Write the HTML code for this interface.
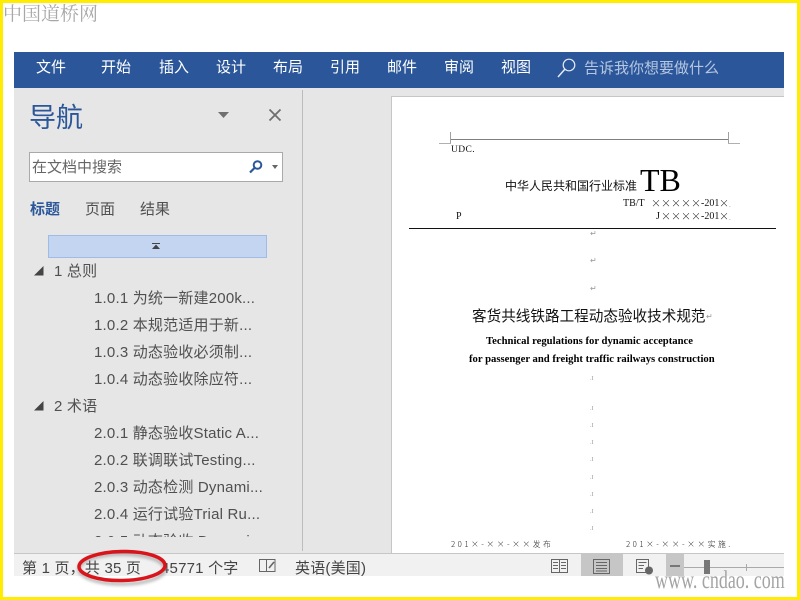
<!DOCTYPE html>
<html lang="zh">
<head>
<meta charset="utf-8">
<style>
html,body{margin:0;padding:0;background:#fff}
#r{position:relative;width:800px;height:600px;overflow:hidden;background:#fff;font-family:"Liberation Sans","Noto Sans CJK SC",sans-serif;color:#444}
.a,.t{position:absolute}
.t{white-space:nowrap;line-height:20px}
.m{color:#fff;font-size:15px;top:58px}
.n{font-size:15px;color:#505050;left:94px;letter-spacing:.2px}
.s{font-size:15px;color:#444;top:559px;letter-spacing:.2px}
.d{font-family:"Liberation Serif","Noto Sans CJK SC",serif;color:#111}
.k{font-size:6px;color:#999;font-family:"Liberation Serif",serif;left:590px}
.x{font-family:"Noto Sans CJK SC",sans-serif;font-weight:300}
</style>
</head>
<body>
<div id="r">
<!-- yellow frame -->
<div class="a" style="left:0;top:0;width:800px;height:3px;background:#ffec00"></div>
<div class="a" style="left:0;top:0;width:3px;height:600px;background:#ffec00"></div>
<div class="a" style="left:797px;top:0;width:3px;height:600px;background:#ffec00"></div>
<div class="a" style="left:0;top:597px;width:800px;height:3px;background:#ffec00"></div>

<div class="t" style="left:3px;top:1px;font-size:19px;line-height:24px;color:#a8a8a8;font-family:'Noto Serif CJK SC',serif">中国道桥网</div>

<!-- ribbon -->
<div class="a" style="left:14px;top:52px;width:770px;height:36px;background:#2b579a"></div>
<div class="t m" style="left:36px">文件</div>
<div class="t m" style="left:101px">开始</div>
<div class="t m" style="left:159px">插入</div>
<div class="t m" style="left:216px">设计</div>
<div class="t m" style="left:273px">布局</div>
<div class="t m" style="left:330px">引用</div>
<div class="t m" style="left:387px">邮件</div>
<div class="t m" style="left:444px">审阅</div>
<div class="t m" style="left:501px">视图</div>
<svg class="a" style="left:556px;top:57px" width="22" height="22" viewBox="0 0 22 22"><circle cx="13" cy="8" r="5.800" fill="none" stroke="#e4eaf4" stroke-width="1.200"/><path d="M8.800 12.200L2 20" stroke="#e4eaf4" stroke-width="1.500" fill="none"/></svg>
<div class="t" style="left:584px;top:59px;font-size:15px;color:#b6c6e0">告诉我你想要做什么</div>

<!-- main gray -->
<div class="a" style="left:14px;top:88px;width:770px;height:465px;background:#e6e6e6"></div>
<div class="a" style="left:302px;top:90px;width:1px;height:461px;background:#bcbcbc"></div>

<!-- nav pane -->
<div class="t" style="left:29px;top:101px;font-size:27px;line-height:34px;color:#2b579a">导航</div>
<svg class="a" style="left:217px;top:111px" width="14" height="8"><path d="M1 1H12L6.500 7Z" fill="#707070"/></svg>
<svg class="a" style="left:268px;top:108px" width="14" height="14"><path d="M1.500 1.500L12.500 12.500M12.500 1.500L1.500 12.500" stroke="#6e6e6e" stroke-width="1.800"/></svg>

<div class="a" style="left:29px;top:152px;width:252px;height:28px;background:#fff;border:1px solid #a9a9a9"></div>
<div class="t" style="left:32px;top:158px;font-size:15px;color:#666">在文档中搜索</div>
<svg class="a" style="left:248px;top:159px" width="16" height="16"><circle cx="9.500" cy="6" r="3.800" fill="none" stroke="#2b579a" stroke-width="2"/><path d="M6.500 9L2 13.500" stroke="#2b579a" stroke-width="2.200"/></svg>
<svg class="a" style="left:271px;top:165px" width="8" height="5"><path d="M1 0H7L4 4Z" fill="#666"/></svg>

<div class="t" style="left:30px;top:200px;font-size:15px;color:#2b579a;font-weight:bold">标题</div>
<div class="t" style="left:85px;top:200px;font-size:15px;color:#505050">页面</div>
<div class="t" style="left:140px;top:200px;font-size:15px;color:#505050">结果</div>

<div class="a" style="left:48px;top:235px;width:217px;height:21px;background:#c3d5f1;border:1px solid #9fbce6"></div>
<svg class="a" style="left:152px;top:243px" width="9" height="7"><path d="M0 0H8V1H0ZM4 1.500L8 6H0Z" fill="#444"/></svg>

<svg class="a" style="left:34px;top:266px" width="10" height="10"><path d="M9.500 0V9.500H0Z" fill="#444"/></svg>
<div class="t n" style="left:54px;top:262px">1 总则</div>
<div class="t n" style="top:289px">1.0.1 为统一新建200k...</div>
<div class="t n" style="top:316px">1.0.2 本规范适用于新...</div>
<div class="t n" style="top:343px">1.0.3 动态验收必须制...</div>
<div class="t n" style="top:370px">1.0.4 动态验收除应符...</div>
<svg class="a" style="left:34px;top:401px" width="10" height="10"><path d="M9.500 0V9.500H0Z" fill="#444"/></svg>
<div class="t n" style="left:54px;top:397px">2 术语</div>
<div class="t n" style="top:424px">2.0.1 静态验收Static A...</div>
<div class="t n" style="top:451px">2.0.2 联调联试Testing...</div>
<div class="t n" style="top:478px">2.0.3 动态检测 Dynami...</div>
<div class="t n" style="top:505px">2.0.4 运行试验Trial Ru...</div>
<div class="a" style="left:20px;top:532px;width:270px;height:5px;overflow:hidden"><div class="t n" style="left:74px;top:0">2.0.5 动态验收 Dynami...</div></div>

<!-- document page -->
<div class="a" style="left:391px;top:96px;width:393px;height:457px;background:#fff;border-left:1px solid #c6c6c6;border-top:1px solid #c6c6c6;box-sizing:border-box"></div>
<div class="a" style="left:450px;top:139px;width:279px;height:1px;background:#808080"></div>
<div class="a" style="left:450px;top:132px;width:1px;height:11px;background:#a0a0a0"></div>
<div class="a" style="left:728px;top:132px;width:1px;height:11px;background:#a0a0a0"></div>
<div class="a" style="left:439px;top:143px;width:12px;height:1px;background:#b0b0b0"></div>
<div class="a" style="left:728px;top:143px;width:12px;height:1px;background:#b0b0b0"></div>
<div class="t d" style="left:451px;top:140px;font-size:9.500px;letter-spacing:.4px">UDC.</div>
<div class="t d" style="left:505px;top:176px;font-size:12px;font-family:'Noto Sans CJK SC',sans-serif">中华人民共和国行业标准</div>
<div class="t d" style="left:640px;top:164px;font-size:32px;line-height:32px;color:#000">TB</div>
<div class="t d" style="left:623px;top:194px;font-size:10px">TB/T</div>
<div class="t d x" style="left:651px;top:193px;font-size:10px">×××××</div>
<div class="t d" style="left:701px;top:194px;font-size:10px">-201</div>
<div class="t d x" style="left:719px;top:193px;font-size:10px">×</div>
<div class="t k" style="left:729px;top:195px;font-size:7px">.</div>
<div class="t d" style="left:456px;top:207px;font-size:10px">P</div>
<div class="t d" style="left:656px;top:207px;font-size:10px">J</div>
<div class="t d x" style="left:661px;top:206px;font-size:10px">××××</div>
<div class="t d" style="left:701px;top:207px;font-size:10px">-201</div>
<div class="t d x" style="left:719px;top:206px;font-size:10px">×</div>
<div class="t k" style="left:729px;top:208px;font-size:7px">.</div>
<div class="a" style="left:409px;top:228px;width:367px;height:1px;background:#111"></div>
<div class="t k" style="top:224px;font-size:8px">↵</div>
<div class="t k" style="top:251px;font-size:8px">↵</div>
<div class="t k" style="top:279px;font-size:8px">↵</div>
<div class="t d" style="left:472px;top:306px;font-size:14.600px;font-family:'Noto Sans CJK SC',sans-serif;color:#111">客货共线铁路工程动态验收技术规范</div>
<div class="t k" style="left:706px;top:307px;font-size:8px">↵</div>
<div class="t d" style="left:486px;top:332px;font-size:10.660px;font-weight:bold;color:#000">Technical regulations for dynamic acceptance</div>
<div class="t d" style="left:469px;top:350px;font-size:10.660px;font-weight:bold;color:#000">for passenger and freight traffic railways construction</div>
<div class="t k" style="top:369px">.I</div>
<div class="t k" style="top:399px">.I</div>
<div class="t k" style="top:416px">.I</div>
<div class="t k" style="top:433px">.I</div>
<div class="t k" style="top:450px">.I</div>
<div class="t k" style="top:468px">.I</div>
<div class="t k" style="top:485px">.I</div>
<div class="t k" style="top:502px">.I</div>
<div class="t k" style="top:519px">.I</div>
<div class="t d x" style="left:451px;top:535px;font-size:7.800px;letter-spacing:2.500px;color:#222">201×-××-××发布</div>
<div class="t d x" style="left:626px;top:535px;font-size:7.800px;letter-spacing:2.500px;color:#222">201×-××-××实施.</div>

<!-- status bar -->
<div class="a" style="left:14px;top:553px;width:770px;height:23px;background:#f1f1f1;border-top:1px solid #c6c6c6;box-sizing:border-box"></div>
<div class="t s" style="left:22px">第 1 页，共 35 页</div>
<div class="t s" style="left:161px">45771 个字</div>
<svg class="a" style="left:258px;top:558px" width="20" height="16" fill="none" stroke="#666"><path d="M1.500 1.500H8.500V13.500H1.500ZM8.500 1.500H17V13.500H8.500"/><path d="M11 10L16 4" stroke-width="1.600"/></svg>
<div class="t s" style="left:295px">英语(美国)</div>

<svg class="a" style="left:550px;top:558px" width="19" height="17" fill="none" stroke="#666"><path d="M1.500 1.500H9.500V14.500H1.500ZM9.500 1.500H17.500V14.500H9.500ZM3 4.500H8M3 7.500H8M3 10.500H8M11 4.500H16M11 7.500H16M11 10.500H16"/></svg>
<div class="a" style="left:581px;top:554px;width:42px;height:22px;background:#c6c6c6"></div>
<svg class="a" style="left:593px;top:558px" width="18" height="17" fill="none" stroke="#666"><path d="M0.500 1.500H16.500V15.500H0.500ZM3 4.500H14M3 7.500H14M3 10.500H14M3 13H14"/></svg>
<svg class="a" style="left:635px;top:558px" width="19" height="17" fill="none" stroke="#666"><path d="M1.500 1.500H13.500V14.500H1.500ZM3.500 4.500H11.500M3.500 7.500H9M3.500 10.500H8"/><circle cx="14" cy="12.500" r="4" fill="#666" stroke="none"/></svg>
<div class="a" style="left:666px;top:554px;width:18px;height:22px;background:#c6c6c6"></div>
<div class="a" style="left:670px;top:565px;width:10px;height:2px;background:#777"></div>
<div class="a" style="left:684px;top:567px;width:100px;height:1px;background:#aaa"></div>
<div class="a" style="left:746px;top:564px;width:1px;height:7px;background:#aaa"></div>
<div class="a" style="left:704px;top:560px;width:6px;height:14px;background:#777"></div>

<div class="t" style="left:655px;top:569px;font-size:25px;line-height:24px;color:#a4a4a4;font-family:'Liberation Serif',serif;transform:scaleX(.72);transform-origin:left">www. cndao. com</div>

<!-- red ellipse -->
<svg class="a" style="left:70px;top:540px" width="110" height="56">
<defs><filter id="b" x="-20%" y="-40%" width="140%" height="180%"><feGaussianBlur stdDeviation="1.500"/></filter></defs>
<ellipse cx="52" cy="29" rx="43" ry="15" fill="none" stroke="#777" stroke-width="3" opacity=".6" filter="url(#b)"/>
<ellipse cx="52" cy="26" rx="43" ry="14.500" fill="none" stroke="#d9151b" stroke-width="3.500" transform="rotate(-1 52 26)"/>
</svg>
</div>
</body>
</html>
